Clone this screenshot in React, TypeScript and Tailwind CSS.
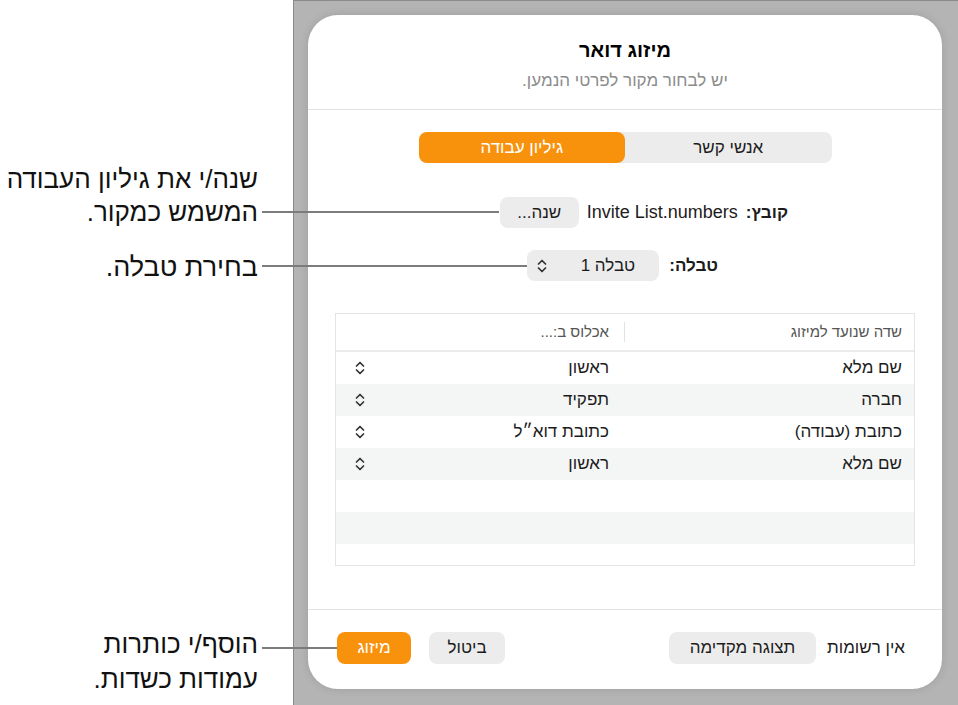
import React from "react";

const font = { fontFamily: '"Liberation Sans", Arial, sans-serif' };

const rows = [
  { field: "שם מלא", source: "ראשון" },
  { field: "חברה", source: "תפקיד" },
  { field: "כתובת (עבודה)", source: "כתובת דוא\u05F4ל" },
  { field: "שם מלא", source: "ראשון" },
  null,
  null,
  null,
];

function UpDown() {
  return (
    <svg width="10" height="14" viewBox="0 0 10 14" fill="none">
      <path d="M1.5 5L5 1.5L8.5 5" stroke="#333" strokeWidth="1.7" strokeLinecap="round" strokeLinejoin="round" />
      <path d="M1.5 9L5 12.5L8.5 9" stroke="#333" strokeWidth="1.7" strokeLinecap="round" strokeLinejoin="round" />
    </svg>
  );
}

function Callouts() {
  return (
    <div className="flex w-[293px] shrink-0 flex-col items-start pr-[35px] text-[26px] text-[#111]" dir="rtl">
      <div className="mt-[163px] text-right leading-[33px]">
        <div>שנה/י את גיליון העבודה</div>
        <div>המשמש כמקור.</div>
      </div>
      <div className="mt-[21px] text-right text-[27px] leading-[34px]">בחירת טבלה.</div>
      <div className="mt-[343px] text-right leading-[35px]">
        <div>הוסף/י כותרות</div>
        <div>עמודות כשדות.</div>
      </div>
    </div>
  );
}

function Dialog() {
  return (
    <div className="flex h-full flex-col rounded-[30px] bg-white text-[#1c1c1c] shadow-[0_0_10px_rgba(0,0,0,0.12)]" dir="rtl">
      <div className="border-b border-[#e2e2e2] pt-[22px] pb-[18px] text-center">
        <h1 className="text-[20px] font-bold leading-[26px] text-black">מיזוג דואר</h1>
        <p className="mt-[8px] text-[17px] leading-[20px] text-[#8c8c8c]">יש לבחור מקור לפרטי הנמען.</p>
      </div>

      <div className="flex flex-col items-center pt-[22px]">
        <div className="flex h-[31px] w-[413px] rounded-lg bg-[#ececec] text-[17px]">
          <div className="flex flex-1 items-center justify-center">אנשי קשר</div>
          <div className="flex flex-1 items-center justify-center rounded-lg bg-[#f8920d] text-white">גיליון עבודה</div>
        </div>
      </div>

      <div className="mt-[34px] flex h-[31px] items-center gap-[8px] pr-[154px] text-[17px]">
        <span className="font-bold">קובץ:</span>
        <span dir="ltr" className="text-[18px]">Invite List.numbers</span>
        <button className="ml-[-3px] flex h-[31px] w-[79px] items-center justify-center rounded-lg bg-[#ececec]">שנה...</button>
      </div>

      <div className="mt-[22px] flex h-[31px] items-center gap-[10px] pr-[224px] text-[17px]">
        <span className="font-bold">טבלה:</span>
        <button className="flex h-[31px] w-[132px] items-center justify-between rounded-lg bg-[#ececec] pr-[24px] pl-[10px]">
          <span>טבלה 1</span>
          <UpDown />
        </button>
      </div>

      <div className="mx-[27px] mt-[32px] h-[253px] overflow-hidden border border-[#e4e4e4]">
        <div className="flex h-[38px] items-center border-b-2 border-[#ebebeb] text-[15px] text-[#555]">
          <div className="w-1/2 pr-[12px]">שדה שנועד למיזוג</div>
          <div className="h-[20px] w-px bg-[#e2e2e2]" />
          <div className="flex-1 pr-[15px]">אכלוס ב:...</div>
        </div>
        {rows.map((r, i) => (
          <div key={i} className={`flex h-[32px] shrink-0 items-center text-[17px] ${i % 2 === 1 ? "bg-[#f4f5f5]" : "bg-white"}`}>
            {r && (
              <>
                <div className="w-1/2 pr-[12px]">{r.field}</div>
                <div className="flex flex-1 items-center justify-between pr-[16px] pl-[19px]">
                  <span>{r.source}</span>
                  <UpDown />
                </div>
              </>
            )}
          </div>
        ))}
      </div>

      <div className="flex-1" />

      <div className="flex items-center justify-between border-t border-[#e2e2e2] pt-[22px] pb-[25px] pr-[37px] pl-[29px] text-[17px]">
        <div className="flex items-center gap-[11px]">
          <span>אין רשומות</span>
          <button className="flex h-[32px] w-[147px] items-center justify-center rounded-lg bg-[#ececec]">תצוגה מקדימה</button>
        </div>
        <div className="flex items-center gap-[18px]">
          <button className="flex h-[32px] w-[76px] items-center justify-center rounded-lg bg-[#ececec]">ביטול</button>
          <button className="flex h-[32px] w-[74px] items-center justify-center rounded-lg bg-[#f8920d] text-white">מיזוג</button>
        </div>
      </div>
    </div>
  );
}

export default function App() {
  return (
    <div className="relative flex h-[705px] w-[958px] overflow-hidden bg-white" style={font}>
      <Callouts />
      <div className="flex-1 border-t border-l border-[#8a8a8a] bg-[#b4b4b4] pt-[14px] pr-[16px] pb-[16px] pl-[14px]">
        <Dialog />
      </div>
      <div className="absolute top-[211px] left-[262px] h-[2px] w-[237px] bg-[#7c7c7c]" />
      <div className="absolute top-[265px] left-[262px] h-[2px] w-[265px] bg-[#7c7c7c]" />
      <div className="absolute top-[647px] left-[262px] h-[2px] w-[75px] bg-[#7c7c7c]" />
    </div>
  );
}
